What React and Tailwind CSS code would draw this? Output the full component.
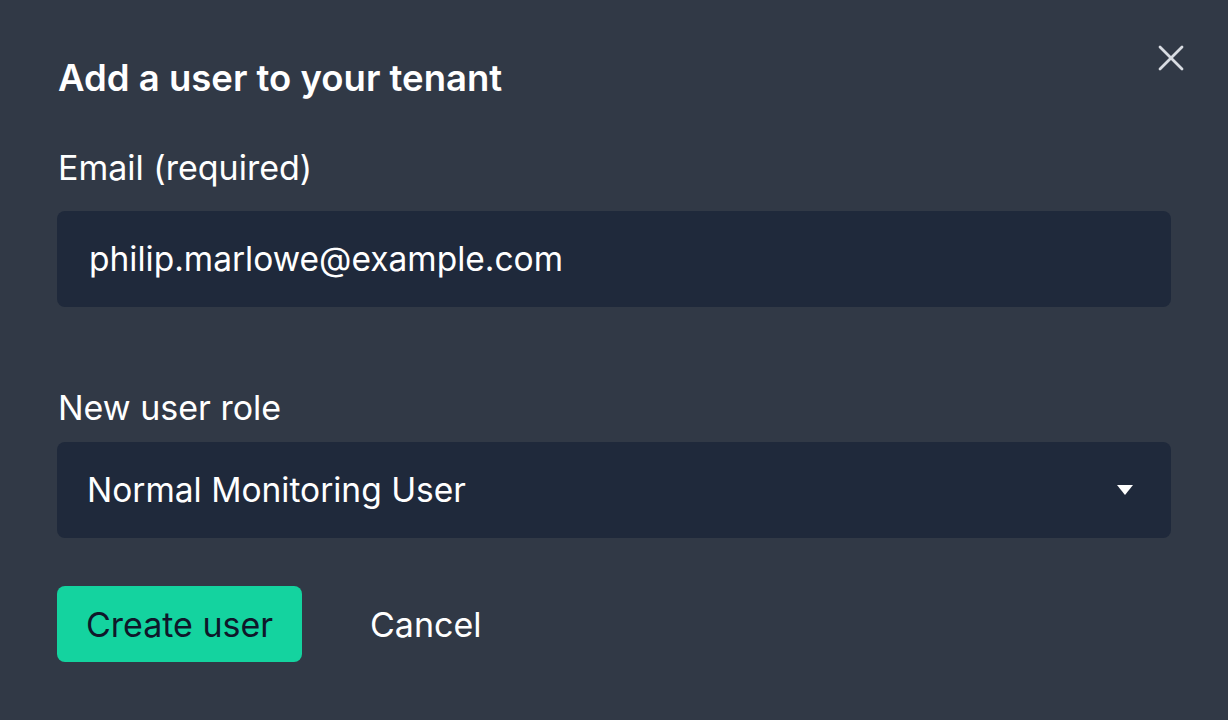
import React from "react";

export default function App() {
  return (
    <div
      className="w-[1228px] h-[720px] bg-[#313946] text-white relative"
      style={{ fontFamily: "Inter, 'Noto Sans', sans-serif" }}
    >
      <button className="absolute right-[44px] top-[45px] w-[26px] h-[26px] flex items-center justify-center text-[#d8dce2]">
        <svg width="26" height="26" viewBox="0 0 26 26" fill="none" stroke="currentColor" strokeWidth="2.8" strokeLinecap="round">
          <line x1="2" y1="2" x2="24" y2="24" />
          <line x1="24" y1="2" x2="2" y2="24" />
        </svg>
      </button>
      <div className="px-[57px] pt-[56px] flex flex-col">
        <h1 className="text-[36.5px] leading-[44px] font-semibold pl-[1px]">Add a user to your tenant</h1>
        <label className="mt-[46px] text-[34px] leading-[44px] pl-[1px]">Email (required)</label>
        <div className="mt-[21px] h-[96px] rounded-[8px] bg-[#1f293b] flex items-center px-[32px] text-[33.5px]">
          philip.marlowe@example.com
        </div>
        <label className="mt-[79px] text-[34px] leading-[44px] pl-[1px]">New user role</label>
        <div className="mt-[12px] h-[96px] rounded-[8px] bg-[#1f293b] flex items-center justify-between pl-[30px] pr-[38px] text-[33.5px]">
          <span>Normal Monitoring User</span>
          <svg width="16" height="10" viewBox="0 0 16 10"><polygon points="0,0 16,0 8,10" fill="white" /></svg>
        </div>
        <div className="mt-[48px] flex items-center gap-[68px]">
          <button className="h-[76px] w-[245px] rounded-[8px] bg-[#14d39f] text-[#0f172a] text-[34px]">Create user</button>
          <button className="text-[34px] text-white">Cancel</button>
        </div>
      </div>
    </div>
  );
}
